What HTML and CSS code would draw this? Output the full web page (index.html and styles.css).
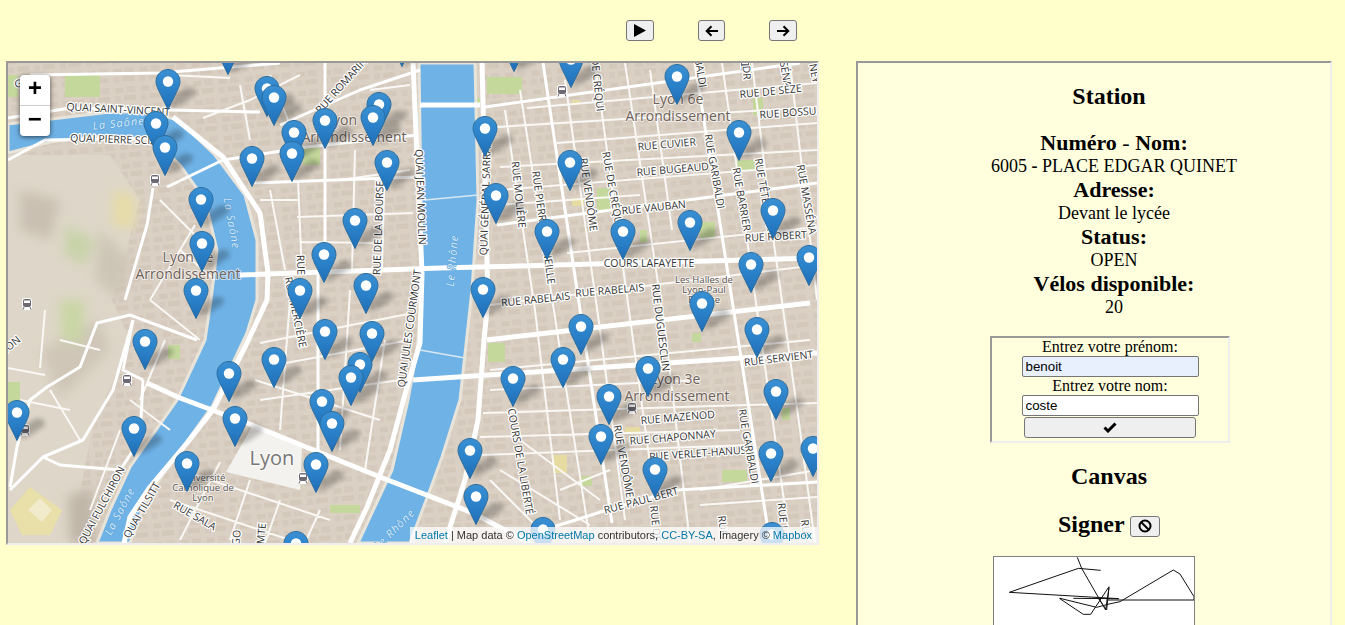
FILE: index.html
```html
<!DOCTYPE html>
<html lang="fr">
  <head>
    <meta charset="UTF-8" />
    <title>Vélos Lyon</title>
    <link rel="stylesheet" href="styles.css">
  </head>
  <body>
    <div class="controls">
      <button class="btn btn-play"><svg width="12" height="13" viewBox="0 0 12 13"><path d="M0 0 L12 6.5 L0 13 Z" /></svg></button>
      <button class="btn btn-prev"><svg width="14" height="12" viewBox="0 0 14 12"><path class="ico" d="M13 6 H2 M6.5 1.2 L1.7 6 L6.5 10.8" /></svg></button>
      <button class="btn btn-next"><svg width="14" height="12" viewBox="0 0 14 12"><path class="ico" d="M1 6 H12 M7.5 1.2 L12.3 6 L7.5 10.8" /></svg></button>
    </div>

    <div class="main">
      <div class="map">
        <svg class="map-svg" width="809" height="480" viewBox="8 63 809 480">
          <defs>
            <pattern id="bati" width="26" height="19" patternUnits="userSpaceOnUse" patternTransform="rotate(-5)">
              <rect width="26" height="19" fill="#dad0c4" />
              <rect x="3" y="3" width="8" height="5" fill="#d3c8ba" />
              <rect x="14" y="2" width="9" height="6" fill="#d5cabd" />
              <rect x="2" y="11" width="6" height="6" fill="#d5cabd" />
              <rect x="11" y="11" width="12" height="5" fill="#d3c8ba" />
            </pattern>
            <linearGradient id="pinfill" x1="0" y1="0" x2="0" y2="1">
              <stop offset="0" stop-color="#3a90d2" />
              <stop offset="0.55" stop-color="#2a80c8" />
              <stop offset="1" stop-color="#1f6db5" />
            </linearGradient>
            <filter id="blur2"><feGaussianBlur stdDeviation="2.5" /></filter>
            <filter id="blur6"><feGaussianBlur stdDeviation="6" /></filter>
            <g id="pin">
              <path d="M0 1.5 L-9.5 -18 C-11 -21.5 -12 -24 -12 -26.5 C-12 -33.2 -6.6 -38.5 0 -38.5 C6.6 -38.5 12 -33.2 12 -26.5 C12 -24 11 -21.5 9.5 -18 Z" fill="url(#pinfill)" stroke="#2b6d9e" />
              <circle cx="0" cy="-26.5" r="5.2" fill="#fff" />
            </g>
            <path id="ombre" d="M1 0 L12 -3 L27 -13 C30 -17 25 -22 18 -20 L5 -12 Z" />
            <g id="metro">
              <rect x="-5" y="-6" width="10" height="12" rx="3" fill="#fff" />
              <rect x="-4" y="-5" width="8" height="8" rx="2" fill="#6d6873" />
              <rect x="-3" y="-3.5" width="6" height="2.5" fill="#fff" />
              <path d="M-3 3 L-4 5.5 M3 3 L4 5.5" stroke="#6d6873" />
            </g>
          </defs>

          <!-- fond -->
          <rect x="8" y="63" width="809" height="480" fill="url(#bati)" />
          <path class="hill" d="M8 155 L110 155 L140 200 L112 300 L130 340 L92 430 L70 543 L8 543 Z" />
          <g filter="url(#blur6)">
            <path fill="#cfc6b8" d="M40 350 L100 320 L110 350 L60 400 Z" />
            <path fill="#bfb6a8" d="M68 495 L92 490 L96 540 L70 543 Z" />
            <path fill="#c9d6a4" d="M60 300 L85 300 L82 345 L62 340 Z" />
            <path fill="#e6dca8" d="M113 190 L135 195 L135 228 L113 226 Z" />
            <path fill="#c7d3a8" d="M65 225 L95 240 L85 265 L65 255 Z" />
            <path fill="#cdc5b6" d="M100 230 L130 260 L120 300 L95 280 Z" />
            <path fill="#c9c0b2" d="M20 190 L60 200 L50 240 L20 230 Z" />
          </g>
          <path fill="#e9dfa8" d="M10 510 L30 487 L62 510 L50 535 L22 535 Z" />
          <path fill="#f1eacb" d="M28 510 L40 498 L52 510 L42 522 Z" />

          <!-- parcs -->
          <g class="park">
            <rect x="487" y="77" width="35" height="17" />
            <rect x="474" y="98" width="6" height="8" />
            <rect x="753" y="98" width="10" height="17" />
            <rect x="737" y="160" width="18" height="10" />
            <rect x="597" y="188" width="13" height="22" />
            <rect x="700" y="222" width="15" height="16" />
            <rect x="640" y="230" width="7" height="12" />
            <rect x="488" y="343" width="17" height="19" />
            <rect x="722" y="470" width="25" height="12" />
            <rect x="692" y="333" width="9" height="9" />
            <rect x="782" y="408" width="8" height="12" />
            <rect x="303" y="148" width="17" height="17" />
            <rect x="65" y="75" width="35" height="22" />
            <rect x="8" y="75" width="10" height="22" />
            <rect x="8" y="382" width="12" height="22" />
            <rect x="168" y="345" width="12" height="14" />
            <rect x="330" y="505" width="30" height="8" />
            <rect x="580" y="476" width="12" height="10" />
          </g>
          <g class="sand">
            <rect x="572" y="100" width="8" height="5" />
            <rect x="572" y="198" width="12" height="8" />
            <rect x="553" y="455" width="14" height="18" />
            <rect x="625" y="427" width="15" height="7" />
          </g>
          <path class="plaza" d="M253 425 L302 447 L300 490 L226 472 Z" />

          <!-- fleuves -->
          <path class="saone" d="M8 124 L60 118 L110 112 L150 112 L178 120 L215 155 L245 195 L257 240 L257 300 L247 333 L213 405 L170 465 L147 497 L130 543 L97 543 L110 510 L130 467 L177 400 L205 340 L211 300 L217 250 L205 200 L180 165 L155 141 L100 136 L50 142 L8 153 Z" />
          <path class="rhone" d="M419 63 L475 63 L478 200 L472 290 L460 400 L442 457 L430 490 L410 543 L358 543 L378 500 L392 470 L408 400 L417 350 L422 290 L421 200 Z" />

          <!-- rues -->
          <path class="road-s" d="M505 110 L535 310 L560 520 M520 90 L560 350 L590 540 M595 63 L655 500 M625 63 L665 330 L690 543 M722 63 L790 543 M752 63 L773 237 L800 430 L815 543 M790 63 L817 300 M650 70 L672 230 M565 80 L600 330 L625 520
            M527 108 L817 83 M497 127 L817 107 M557 143 L817 123 M500 167 L817 150 M500 190 L817 165 M497 205 L640 195 M567 253 L817 227 M490 305 L817 265 M483 413 L817 403 M480 437 L740 430 M480 455 L747 445 M700 490 L817 470 M490 370 L810 340 M490 390 L700 380 M700 505 L817 497 M490 480 L540 530 M500 470 L590 525 M520 440 L600 500 M560 490 L610 470
            M298 180 L302 275 M355 150 L352 270 M385 150 L382 270 M270 190 L285 270 M297 217 L413 213 M300 242 L380 243 M260 200 L300 200 M340 180 L410 170 M260 343 L413 313 M275 365 L410 340 M290 300 L280 430 M350 290 L340 450 M385 340 L365 470 M260 400 L400 380 M255 380 L380 420 M220 462 L180 540 M250 480 L230 540 M280 500 L265 543 M320 510 L305 543 M180 470 L330 520 M170 500 L290 540 M203 118 L250 100 L300 75 M270 75 L300 150 M240 85 L250 140 M170 75 L230 78 M370 90 L410 85 M160 200 L200 240 M195 225 L150 300 M180 250 L215 280 M150 300 L200 340 M165 340 L140 400 M50 390 L80 440 M20 400 L70 410 M60 340 L100 350 M8 368 L45 375 M40 368 L45 310 M120 430 L90 510 M130 400 L170 430" />
          <path class="road-m" d="M543 63 L612 523 M695 63 L770 543 M485 107 L800 63 M497 225 L817 183 M550 528 L607 510 L677 490 L817 482 M8 118 L70 108 L170 110 L260 112 M8 160 L45 140 L155 138 M30 75 L160 73 L280 63 M325 63 L325 275 M318 275 L318 450 M167 187 L223 160 L307 147 L417 135 M253 183 L417 177 M280 125 L360 90 L420 70 M153 188 L147 225 L125 300 M10 487 L17 447 L30 400 L47 387 L80 367 L97 323 L130 315 L197 340 M10 490 L43 457 L83 440 L113 390 L133 320 M133 320 L123 370 L143 380 M143 380 L140 440 L120 470 L60 465 L43 457" />
          <path class="road-l" d="M413 63 L422 273 L420 343 L407 387 L390 450 L367 507 L350 543 M482 63 L488 300 L484 340 L478 420 L465 480 L445 543 M240 275 L440 268 L817 258 M487 340 L810 303 M413 380 L817 353 M173 117 L223 157 L260 213 L268 273 L267 300 L247 343 L213 410 L187 443 L150 487 L130 517 L124 543 M147 383 L180 398 L247 423 L380 477 L473 513 L533 545 M420 105 L480 105" />

          <!-- ponts -->
          <path class="bridge" d="M425 200 L478 195 M420 350 L465 358" />

          <!-- gares et métro -->
          <use href="#metro" x="155" y="180" />
          <use href="#metro" x="27" y="304" />
          <use href="#metro" x="127" y="380" />
          <use href="#metro" x="25" y="430" />
          <use href="#metro" x="303" y="478" />
          <use href="#metro" x="562" y="91" />
          <use href="#metro" x="632" y="408" />
          <use href="#metro" x="745" y="65" />

          <!-- noms de quartiers -->
          <g class="district">
            <text x="678" y="104">Lyon 6e</text>
            <text x="678" y="121">Arrondissement</text>
            <text x="675" y="384">Lyon 3e</text>
            <text x="677" y="401">Arrondissement</text>
            <text x="354" y="125">Lyon 1er</text>
            <text x="354" y="142">Arrondissement</text>
            <text x="188" y="262">Lyon 5e</text>
            <text x="188" y="279">Arrondissement</text>
          </g>
          <text class="city" x="272" y="465">Lyon</text>
          <g class="poi">
            <text x="203" y="481">Université</text>
            <text x="203" y="491">Catholique de</text>
            <text x="203" y="501">Lyon</text>
            <text x="704" y="283">Les Halles de</text>
            <text x="704" y="293">Lyon-Paul</text>
            <text x="704" y="303">Bocuse</text>
          </g>

          <!-- noms d'eau -->
          <g class="river">
            <text transform="translate(119 127) rotate(-6)">La Saône</text>
            <text transform="translate(228 224) rotate(80)">La Saône</text>
            <text transform="translate(123 513) rotate(-62)">La Saône</text>
            <text transform="translate(456 261) rotate(-85)">Le Rhône</text>
            <text transform="translate(397 532) rotate(-45)">Le Rhône</text>
          </g>

          <!-- noms de rues -->
          <g class="street">
            <text transform="translate(118 113) rotate(3)">QUAI SAINT-VINCENT</text>
            <text transform="translate(116 143) rotate(2)">QUAI PIERRE SCIZE</text>
            <text transform="translate(20 87) rotate(-5)">GI</text>
            <text transform="translate(417 197) rotate(88)">QUAI JEAN MOULIN</text>
            <text transform="translate(413 329) rotate(-82)">QUAI JULES COURMONT</text>
            <text transform="translate(489 197) rotate(-88)">QUAI GÉNÉRAL SARRAIL</text>
            <text transform="translate(515 195) rotate(84)">RUE MOLIÈRE</text>
            <text transform="translate(540 228) rotate(82)">RUE PIERRE CORNEILLE</text>
            <text transform="translate(585 195) rotate(82)">RUE VENDÔME</text>
            <text transform="translate(609 190) rotate(80)">RUE DE CRÉQUI</text>
            <text transform="translate(594 85) rotate(84)">DE CRÉQUI</text>
            <text transform="translate(711 172) rotate(80)">RUE GARIBALDI</text>
            <text transform="translate(695 62) rotate(80)">GARIBALDI</text>
            <text transform="translate(738 200) rotate(80)">RUE BARRIER</text>
            <text transform="translate(761 195) rotate(80)">RUE TÊTE D'OR</text>
            <text transform="translate(803 200) rotate(80)">RUE MASSÉNA</text>
            <text transform="translate(780 64) rotate(80)">MASSÉNA</text>
            <text transform="translate(811 74) rotate(78)">NEY</text>
            <text transform="translate(743 73) rotate(85)">DR</text>
            <text transform="translate(771 95) rotate(-6)">RUE DE SÈZE</text>
            <text transform="translate(794 116) rotate(-4)">RUE BOSSUET</text>
            <text transform="translate(667 148) rotate(-5)">RUE CUVIER</text>
            <text transform="translate(673 173) rotate(-5)">RUE BUGEAUD</text>
            <text transform="translate(654 211) rotate(-6)">RUE VAUBAN</text>
            <text transform="translate(776 240) rotate(-3)">RUE ROBERT</text>
            <text transform="translate(649 267)">COURS LAFAYETTE</text>
            <text transform="translate(536 303) rotate(-6)">RUE RABELAIS</text>
            <text transform="translate(610 294) rotate(-5)">RUE RABELAIS</text>
            <text transform="translate(657 328) rotate(83)">RUE DUGUESCLIN</text>
            <text transform="translate(779 362) rotate(-7)">RUE SERVIENT</text>
            <text transform="translate(678 421) rotate(-5)">RUE MAZENOD</text>
            <text transform="translate(673 441) rotate(-5)">RUE CHAPONNAY</text>
            <text transform="translate(698 457) rotate(-4)">RUE VERLET-HANUS</text>
            <text transform="translate(745 447) rotate(80)">RUE GARIBALDI</text>
            <text transform="translate(517 462) rotate(80)">COURS DE LA LIBERTÉ</text>
            <text transform="translate(620 462) rotate(80)">RUE VENDÔME</text>
            <text transform="translate(642 504) rotate(-15)">RUE PAUL BERT</text>
            <text transform="translate(652 524) rotate(84)">RUE DE</text>
            <text transform="translate(719 526) rotate(84)">RUE</text>
            <text transform="translate(779 516) rotate(84)">RUE J</text>
            <text transform="translate(802 530) rotate(84)">RUE</text>
            <text transform="translate(344 88) rotate(-48)">RUE ROMARIN</text>
            <text transform="translate(382 228) rotate(-88)">RUE DE LA BOURSE</text>
            <text transform="translate(292 313) rotate(78)">RUE MERCIÈRE</text>
            <text transform="translate(297 265) rotate(88)">RUE</text>
            <text transform="translate(105 507) rotate(-62)">QUAI FULCHIRON</text>
            <text transform="translate(145 512) rotate(-60)">QUAI TILSITT</text>
            <text transform="translate(193 519) rotate(30)">RUE SALA</text>
            <text transform="translate(13 348) rotate(-40)">SON</text>
            <text transform="translate(240 538) rotate(-85)">GO</text>
            <text transform="translate(265 534) rotate(-85)">MTE</text>
          </g>

          <!-- ombres des marqueurs -->
          <g class="shadows" filter="url(#blur2)">
            <use href="#ombre" x="402" y="65" /><use href="#ombre" x="514" y="70" /><use href="#ombre" x="228" y="73" /><use href="#ombre" x="571" y="86" />
            <use href="#ombre" x="677" y="103" /><use href="#ombre" x="168" y="108" /><use href="#ombre" x="267" y="115" /><use href="#ombre" x="274" y="124" />
            <use href="#ombre" x="379" y="131" /><use href="#ombre" x="373" y="144" /><use href="#ombre" x="325" y="147" /><use href="#ombre" x="156" y="150" />
            <use href="#ombre" x="485" y="155" /><use href="#ombre" x="294" y="159" /><use href="#ombre" x="739" y="159" /><use href="#ombre" x="165" y="174" />
            <use href="#ombre" x="292" y="180" /><use href="#ombre" x="252" y="185" /><use href="#ombre" x="387" y="189" /><use href="#ombre" x="570" y="189" />
            <use href="#ombre" x="496" y="222" /><use href="#ombre" x="201" y="226" /><use href="#ombre" x="773" y="237" /><use href="#ombre" x="355" y="247" />
            <use href="#ombre" x="690" y="249" /><use href="#ombre" x="547" y="258" /><use href="#ombre" x="623" y="258" /><use href="#ombre" x="202" y="270" />
            <use href="#ombre" x="324" y="281" /><use href="#ombre" x="809" y="284" /><use href="#ombre" x="751" y="291" /><use href="#ombre" x="366" y="312" />
            <use href="#ombre" x="483" y="316" /><use href="#ombre" x="196" y="317" /><use href="#ombre" x="300" y="317" /><use href="#ombre" x="702" y="330" />
            <use href="#ombre" x="581" y="353" /><use href="#ombre" x="757" y="356" /><use href="#ombre" x="325" y="358" /><use href="#ombre" x="372" y="360" />
            <use href="#ombre" x="145" y="368" /><use href="#ombre" x="274" y="386" /><use href="#ombre" x="563" y="386" /><use href="#ombre" x="360" y="391" />
            <use href="#ombre" x="648" y="395" /><use href="#ombre" x="229" y="400" /><use href="#ombre" x="351" y="404" /><use href="#ombre" x="513" y="405" />
            <use href="#ombre" x="776" y="418" /><use href="#ombre" x="609" y="423" /><use href="#ombre" x="322" y="428" /><use href="#ombre" x="17" y="439" />
            <use href="#ombre" x="235" y="445" /><use href="#ombre" x="332" y="450" /><use href="#ombre" x="134" y="455" /><use href="#ombre" x="601" y="463" />
            <use href="#ombre" x="813" y="475" /><use href="#ombre" x="470" y="477" /><use href="#ombre" x="771" y="480" /><use href="#ombre" x="187" y="490" />
            <use href="#ombre" x="316" y="491" /><use href="#ombre" x="655" y="496" /><use href="#ombre" x="476" y="523" />
          </g>

          <!-- marqueurs des stations -->
          <use href="#pin" x="402" y="65" /><use href="#pin" x="514" y="70" /><use href="#pin" x="228" y="73" /><use href="#pin" x="571" y="86" />
          <use href="#pin" x="677" y="103" /><use href="#pin" x="168" y="108" /><use href="#pin" x="267" y="115" /><use href="#pin" x="274" y="124" />
          <use href="#pin" x="379" y="131" /><use href="#pin" x="373" y="144" /><use href="#pin" x="325" y="147" /><use href="#pin" x="156" y="150" />
          <use href="#pin" x="485" y="155" /><use href="#pin" x="294" y="159" /><use href="#pin" x="739" y="159" /><use href="#pin" x="165" y="174" />
          <use href="#pin" x="292" y="180" /><use href="#pin" x="252" y="185" /><use href="#pin" x="387" y="189" /><use href="#pin" x="570" y="189" />
          <use href="#pin" x="496" y="222" /><use href="#pin" x="201" y="226" /><use href="#pin" x="773" y="237" /><use href="#pin" x="355" y="247" />
          <use href="#pin" x="690" y="249" /><use href="#pin" x="547" y="258" /><use href="#pin" x="623" y="258" /><use href="#pin" x="202" y="270" />
          <use href="#pin" x="324" y="281" /><use href="#pin" x="809" y="284" /><use href="#pin" x="751" y="291" /><use href="#pin" x="366" y="312" />
          <use href="#pin" x="483" y="316" /><use href="#pin" x="196" y="317" /><use href="#pin" x="300" y="317" /><use href="#pin" x="702" y="330" />
          <use href="#pin" x="581" y="353" /><use href="#pin" x="757" y="356" /><use href="#pin" x="325" y="358" /><use href="#pin" x="372" y="360" />
          <use href="#pin" x="145" y="368" /><use href="#pin" x="274" y="386" /><use href="#pin" x="563" y="386" /><use href="#pin" x="360" y="391" />
          <use href="#pin" x="648" y="395" /><use href="#pin" x="229" y="400" /><use href="#pin" x="351" y="404" /><use href="#pin" x="513" y="405" />
          <use href="#pin" x="776" y="418" /><use href="#pin" x="609" y="423" /><use href="#pin" x="322" y="428" /><use href="#pin" x="17" y="439" />
          <use href="#pin" x="235" y="445" /><use href="#pin" x="332" y="450" /><use href="#pin" x="134" y="455" /><use href="#pin" x="601" y="463" />
          <use href="#pin" x="813" y="475" /><use href="#pin" x="470" y="477" /><use href="#pin" x="771" y="480" /><use href="#pin" x="187" y="490" />
          <use href="#pin" x="316" y="491" /><use href="#pin" x="655" y="496" /><use href="#pin" x="476" y="523" /><use href="#pin" x="543" y="556" />
          <use href="#pin" x="772" y="561" /><use href="#pin" x="296" y="570" />
        </svg>

        <div class="zoom-bar">
          <a class="zoom-in">+</a>
          <a class="zoom-out">−</a>
        </div>
        <div class="attribution">
          <a>Leaflet</a> | Map data © <a>OpenStreetMap</a> contributors, <a>CC-BY-SA</a>, Imagery © <a>Mapbox</a>
        </div>
      </div>

      <div class="panel">
        <h2>Station</h2>
        <div class="infos">
          <div class="info-title">Numéro <span class="dash">-</span> Nom:</div>
          <div class="info-value">6005 <b>-</b> PLACE EDGAR QUINET</div>
          <div class="info-title">Adresse:</div>
          <div class="info-value">Devant le lycée</div>
          <div class="info-title">Status:</div>
          <div class="info-value">OPEN</div>
          <div class="info-title">Vélos disponible:</div>
          <div class="info-value">20</div>
        </div>

        <form class="resa">
          <label for="prenom">Entrez votre prénom:</label>
          <input id="prenom" class="filled" type="text" value="benoit">
          <label for="nom">Entrez votre nom:</label>
          <input id="nom" type="text" value="coste">
          <button class="btn btn-ok" type="button"><svg width="14" height="11" viewBox="0 0 14 11"><path class="ico ico-ok" d="M1.5 5.5 L5 9 L12.5 1.5" /></svg></button>
        </form>

        <h2>Canvas</h2>
        <h2 class="signer">Signer <button class="btn btn-clear"><svg width="14" height="14" viewBox="0 0 14 14"><circle class="ico" cx="7" cy="7" r="5.5" /><path class="ico" d="M3 3 L11 11" /></svg></button></h2>

        <div class="signature">
          <svg width="200" height="150" viewBox="102 171 600 450">
            <path class="trace" d="M352 172 L365 205 L437 330 L447 262 L440 330 L415 295 M422 211 L355 205 L148 277 L476 296 M340 295 L476 296 M298 295 L370 343 L392 343 L447 260 M300 295 L410 322 L447 312 L480 305 L640 210 L660 222 L702 290 L702 300 L440 300" />
          </svg>
        </div>
      </div>
    </div>
  </body>
</html>
```

FILE: styles.css
```css
html,
body {
  margin: 0;
  height: 625px;
  overflow: hidden;
}
body {
  background-color: #ffffcc;
  font-family: "Liberation Serif", serif;
  color: #000;
}

/* boutons du diaporama */
.controls {
  display: flex;
  height: 61px;
  padding: 20px 0 0 626px;
  box-sizing: border-box;
}
.btn {
  display: inline-flex;
  align-items: center;
  justify-content: center;
  padding: 0;
  background-color: #efefef;
  border: 1px solid #767676;
  border-radius: 3px;
  height: 21px;
}
.btn-play {
  width: 28px;
}
.btn-prev {
  width: 27px;
  margin-left: 44px;
}
.btn-next {
  width: 28px;
  margin-left: 44px;
}
.ico {
  fill: none;
  stroke: #000;
  stroke-width: 2;
}
.ico-ok {
  stroke-width: 3;
}

.main {
  display: flex;
  align-items: flex-start;
  padding-left: 6px;
}

/* carte */
.map {
  position: relative;
  width: 809px;
  height: 480px;
  border: 2px solid;
  border-color: #999 #eee #eee #999;
  overflow: hidden;
}
.map-svg {
  display: block;
}
.hill {
  fill: #ded6c8;
}
.park rect {
  fill: #c5d89c;
}
.sand rect {
  fill: #e6dba0;
}
.plaza {
  fill: #f4f2ee;
}
.saone,
.rhone {
  fill: #6fb2e6;
  stroke: #e9e4da;
  stroke-width: 3;
}
.road-s,
.road-m,
.road-l,
.bridge {
  fill: none;
  stroke: #fff;
  stroke-linejoin: round;
}
.road-s {
  stroke-width: 2;
  stroke: #faf8f5;
}
.road-m {
  stroke-width: 3;
}
.road-l {
  stroke-width: 5;
}
.bridge {
  stroke: #d8e8f2;
  stroke-width: 1.5;
}
.shadows {
  fill: #000;
  opacity: 0.24;
}

.district text,
.city,
.poi text,
.street text,
.river text {
  font-family: "Open Sans", sans-serif;
  text-anchor: middle;
  paint-order: stroke;
  stroke-linejoin: round;
}
.district text {
  font-size: 14px;
  fill: #6e6158;
  stroke: rgba(255, 255, 255, 0.6);
  stroke-width: 2px;
}
.city {
  font-size: 20px;
  fill: #777;
  stroke: rgba(255, 255, 255, 0.6);
  stroke-width: 2px;
}
.poi text {
  font-size: 9.5px;
  fill: #57534e;
  stroke: rgba(255, 255, 255, 0.7);
  stroke-width: 2px;
}
.street text {
  font-size: 10.5px;
  fill: #333;
  stroke: #fff;
  stroke-width: 2.5px;
}
.river text {
  font-size: 11px;
  font-style: italic;
  letter-spacing: 1px;
  fill: #d6e9f7;
  stroke: #5fa6dc;
  stroke-width: 1.5px;
}

/* controle de zoom */
.zoom-bar {
  position: absolute;
  left: 12px;
  top: 12px;
  width: 30px;
  border-radius: 4px;
  background-color: #fff;
  box-shadow: 0 1px 5px rgba(0, 0, 0, 0.65);
}
.zoom-bar a {
  display: block;
  height: 30px;
  line-height: 30px;
  text-align: center;
  font-family: "Liberation Mono", monospace;
  font-size: 24px;
  font-weight: bold;
  color: #000;
}
.zoom-in {
  border-bottom: 1px solid #ccc;
}

.attribution {
  position: absolute;
  right: 0;
  bottom: 0;
  padding: 0 5px;
  font-family: "Liberation Sans", Arial, sans-serif;
  font-size: 11px;
  line-height: 16px;
  color: #333;
  background-color: rgba(255, 255, 255, 0.75);
}
.attribution a {
  color: #0078a8;
}

/* panneau de droite */
.panel {
  width: 442px;
  height: 700px;
  margin-left: 37px;
  padding-left: 30px;
  background-color: #ffffdd;
  border: 2px solid;
  border-color: #999 #eee #eee #999;
  text-align: center;
  flex: none;
}
.panel h2 {
  font-size: 24px;
  margin: 20px 0;
}
.infos {
  padding-left: 10px;
  margin-bottom: 18px;
}
.info-title {
  font-size: 22px;
  font-weight: bold;
}
.dash {
  font-weight: normal;
}
.info-value {
  font-size: 18px;
}

.resa {
  width: 236px;
  margin-left: 102px;
  padding-bottom: 3px;
  border: 2px solid;
  border-color: #999 #eee #eee #999;
  display: flex;
  flex-direction: column;
  align-items: center;
  font-size: 16px;
}
.resa input {
  width: 177px;
  height: 21px;
  box-sizing: border-box;
  padding: 1px 3px;
  font-family: "Liberation Sans", Arial, sans-serif;
  font-size: 13.33px;
  border: 1px solid #767676;
  border-radius: 2px;
  background-color: #fff;
}
.resa input.filled {
  background-color: #e8f0fe;
}
.btn-ok {
  width: 172px;
  margin-top: 1px;
}
.btn-clear {
  width: 30px;
  vertical-align: middle;
}
.panel h2.signer {
  margin-top: 21px;
  margin-bottom: 18px;
}
.signature {
  width: 200px;
  height: 150px;
  margin-left: 105px;
  background-color: #fff;
  border: 1px solid #808080;
}
.trace {
  fill: none;
  stroke: #111;
  stroke-width: 3;
}
```
